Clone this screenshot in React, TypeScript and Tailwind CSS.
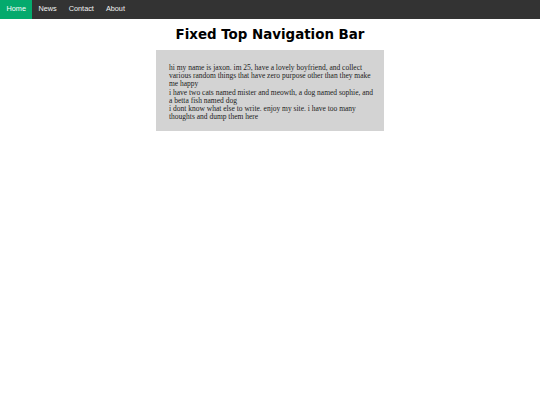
export default function App() {
  return (
    <div className="min-h-[405px] bg-white">
      <div className="flex h-[19px] bg-[#333333] font-['Liberation_Sans',Arial,sans-serif] text-[7.3px] text-[#f2f2f2]">
        <a className="flex items-center bg-[#04AA6D] px-[6.5px] text-white">Home</a>
        <a className="flex items-center px-[6px]">News</a>
        <a className="flex items-center px-[6px]">Contact</a>
        <a className="flex items-center px-[6px]">About</a>
      </div>
      <h1 className="mt-[7px] text-center font-['DejaVu_Sans',Verdana,sans-serif] text-[13.4px] font-bold leading-[17px] text-black">
        Fixed Top Navigation Bar
      </h1>
      <div className="mx-auto mt-[7px] w-[228px] bg-[#d3d3d3] pl-[13px] pr-[10px] pt-[14px] pb-[10px] font-['Liberation_Serif','Times_New_Roman',serif] text-[7.5px] leading-[8.2px] text-[#222]">
        hi my name is jaxon. im 25, have a lovely boyfriend, and collect various random things that have zero purpose other than they make me happy
        <br />
        i have two cats named mister and meowth, a dog named sophie, and a betta fish named dog
        <br />
        i dont know what else to write. enjoy my site. i have too many thoughts and dump them here
      </div>
    </div>
  );
}
